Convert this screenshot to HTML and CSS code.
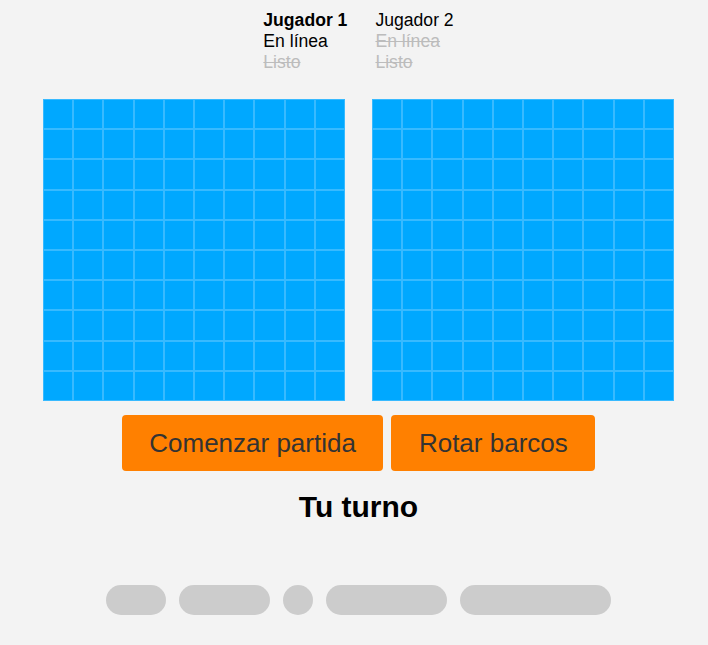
FILE: index.html
```html
<!DOCTYPE html>
<html lang="es">
<head>
<meta charset="utf-8">
<title>Batalla naval</title>
<link rel="stylesheet" href="styles.css">
</head>
<body>
<div class="page">
  <div class="players">
    <div class="player">
      <div class="name bold">Jugador 1</div>
      <div class="status">En línea</div>
      <div class="status off">Listo</div>
    </div>
    <div class="player">
      <div class="name">Jugador 2</div>
      <div class="status off">En línea</div>
      <div class="status off">Listo</div>
    </div>
  </div>
  <div class="boards">
    <div class="board" id="b1"></div>
    <div class="board" id="b2"></div>
  </div>
  <div class="actions">
    <button class="btn">Comenzar partida</button>
    <button class="btn">Rotar barcos</button>
  </div>
  <div class="turn">Tu turno</div>
  <div class="pills">
    <span class="pill w60"></span>
    <span class="pill w91"></span>
    <span class="pill w30"></span>
    <span class="pill w121"></span>
    <span class="pill w151"></span>
  </div>
</div>
<script>
document.querySelectorAll('.board').forEach(function (b) {
  for (var i = 0; i < 100; i++) {
    var c = document.createElement('div');
    c.className = 'cell';
    b.appendChild(c);
  }
});
</script>
</body>
</html>
```

FILE: styles.css
```css
html, body {
  margin: 0;
  padding: 0;
  background: #f3f3f3;
}
body {
  font-family: "Liberation Sans", Arial, sans-serif;
  color: #000;
}
.page {
  padding: 10px 0 0 9px;
  display: flex;
  flex-direction: column;
  align-items: center;
}
.players {
  display: flex;
  gap: 28px;
  font-size: 17.6px;
  line-height: 21px;
}
.bold {
  font-weight: bold;
}
.off {
  color: #bcbcbc;
  text-decoration: line-through;
}
.boards {
  display: flex;
  gap: 27px;
  margin-top: 26px;
}
.board {
  width: 302px;
  height: 302px;
  display: grid;
  grid-template-columns: repeat(10, 1fr);
  grid-template-rows: repeat(10, 1fr);
  background: #00a8ff;
}
.cell {
  border: 1px solid #38baff;
  background: #00a8ff;
}
.actions {
  display: flex;
  gap: 8px;
  margin-top: 14px;
}
.btn {
  height: 56px;
  padding: 0 27.5px;
  border: none;
  border-radius: 4px;
  background: #ff8000;
  color: #333;
  font-family: "Liberation Sans", Arial, sans-serif;
  font-size: 26px;
}
.turn {
  margin-top: 18px;
  font-size: 30px;
  line-height: 36px;
  font-weight: bold;
}
.pills {
  display: flex;
  gap: 13px;
  margin-top: 60px;
}
.pill {
  display: block;
  height: 30px;
  border-radius: 15px;
  background: #cccccc;
}
.w60 { width: 60px; }
.w91 { width: 91px; }
.w30 { width: 30px; }
.w121 { width: 121px; }
.w151 { width: 151px; }
```
